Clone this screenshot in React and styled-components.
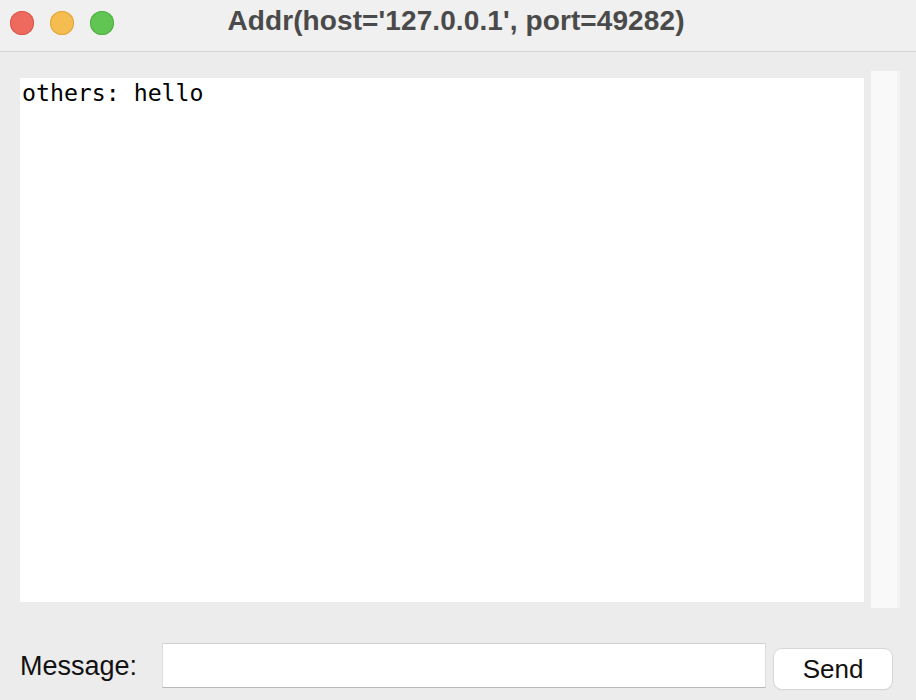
import React from "react";
import styled, { createGlobalStyle } from "styled-components";

const Global = createGlobalStyle`
  html, body { margin: 0; padding: 0; background: #ececec; }
  body { font-family: "Liberation Sans", Arial, sans-serif; }
`;

const Window = styled.div`
  width: 916px;
  height: 700px;
  display: flex;
  flex-direction: column;
  background: #ececec;
  overflow: hidden;
`;

const TitleBar = styled.div`
  height: 52px;
  flex: none;
  display: flex;
  align-items: center;
  position: relative;
  background: #eff0ef;
  border-bottom: 1px solid #d3d3d3;
  box-sizing: border-box;
`;

const Lights = styled.div`
  display: flex;
  gap: 16px;
  padding-left: 10px;
  margin-top: -6px;
`;

const Light = styled.span`
  width: 24px;
  height: 24px;
  border-radius: 50%;
  background: ${(p) => p.$c};
  box-shadow: inset 0 0 0 1px ${(p) => p.$b};
`;

const Title = styled.div`
  position: absolute;
  left: 0;
  right: 0;
  top: 5px;
  text-align: center;
  font-weight: bold;
  font-size: 28px;
  letter-spacing: 0.1px;
  color: #4a4a4a;
  padding-right: 4px;
`;

const Body = styled.div`
  flex: 1;
  display: flex;
  flex-direction: column;
  padding: 19px 16px 0 20px;
`;

const TextRow = styled.div`
  display: flex;
  align-items: flex-start;
  gap: 7px;
`;

const TextArea = styled.div`
  margin-top: 7px;
  width: 844px;
  height: 524px;
  background: #fff;
  box-sizing: border-box;
  padding: 1px 2px;
  font-family: "DejaVu Sans Mono", "Liberation Mono", monospace;
  font-size: 23.2px;
  line-height: 28px;
  color: #000;
  white-space: pre;
`;

const Scrollbar = styled.div`
  width: 26px;
  height: 537px;
  background: #f9f9f9;
  border-right: 3px solid #f3f3f3;
`;

const InputRow = styled.div`
  display: flex;
  align-items: center;
  margin-top: 33px;
`;

const Label = styled.span`
  font-size: 27px;
  color: #111;
  width: 142px;
  margin-top: 2px;
`;

const Entry = styled.div`
  width: 604px;
  height: 45px;
  background: #fff;
  box-sizing: border-box;
  border-top: 1px solid #d0d0d0;
  border-left: 1px solid #dedede;
  border-right: 1px solid #dedede;
  border-bottom: 1px solid #b8b8b8;
  margin-top: 1px;
`;

const Button = styled.div`
  margin-left: 8px;
  margin-top: 8px;
  width: 118px;
  height: 40px;
  box-sizing: border-box;
  border-radius: 8px;
  background: #fff;
  box-shadow: 0 0 0 1px #d6d6d6, 0 1px 1px rgba(0,0,0,0.12);
  display: flex;
  align-items: center;
  justify-content: center;
  font-size: 26px;
  color: #111;
`;

export default function App() {
  return (
    <>
      <Global />
      <Window>
        <TitleBar>
          <Lights>
            <Light $c="#ee6a5f" $b="#d9574c" />
            <Light $c="#f5bd4f" $b="#dea63c" />
            <Light $c="#61c554" $b="#4fae43" />
          </Lights>
          <Title>Addr(host='127.0.0.1', port=49282)</Title>
        </TitleBar>
        <Body>
          <TextRow>
            <TextArea>others: hello</TextArea>
            <Scrollbar />
          </TextRow>
          <InputRow>
            <Label>Message:</Label>
            <Entry />
            <Button>Send</Button>
          </InputRow>
        </Body>
      </Window>
    </>
  );
}
